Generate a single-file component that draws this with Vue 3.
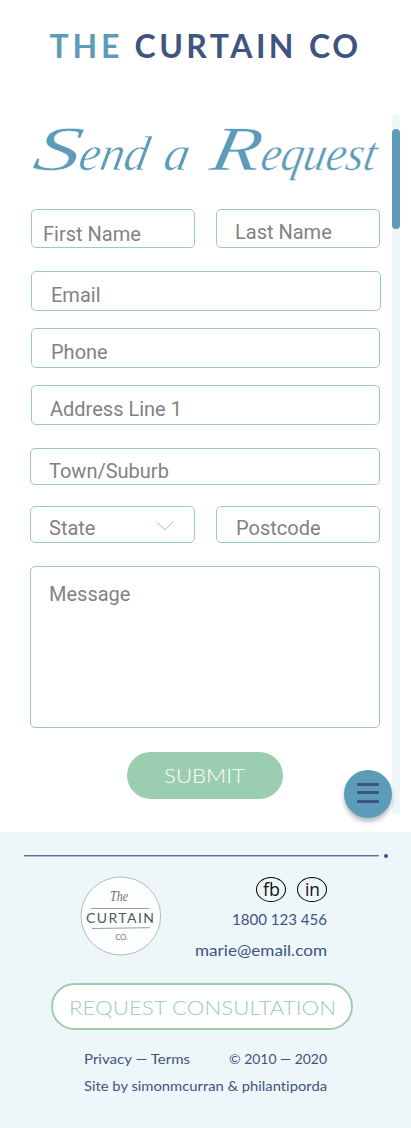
<script setup>
import { h } from 'vue'

// One line of text set to a fixed measure.
const FitText = (props) =>
  h('svg', { width: props.w, height: props.h, class: 'fit' }, [
    h('text', { x: 0, y: props.base, textLength: props.w, lengthAdjust: props.adjust || 'spacingAndGlyphs', fill: 'currentColor' }, props.text),
  ])
FitText.props = ['w', 'h', 'base', 'text', 'adjust']
</script>

<template>
  <div class="page">
    <header class="brand">
      <svg width="411" height="100" role="img">
        <text class="brand-the" x="49.500" y="58" textLength="70">THE</text>
        <text class="brand-name" x="134.500" y="58" textLength="159">CURTAIN</text>
        <text class="brand-name" x="309" y="58" textLength="49">CO</text>
      </svg>
    </header>

    <main class="content">
      <svg class="heading" width="411" height="109">
        <text transform="translate(0 70) skewX(-11)"><tspan class="cap" x="31" textLength="47" lengthAdjust="spacingAndGlyphs">S</tspan><tspan x="77" textLength="69" lengthAdjust="spacingAndGlyphs">end</tspan> <tspan x="162" textLength="25" lengthAdjust="spacingAndGlyphs">a</tspan> <tspan class="cap" x="208" textLength="50" lengthAdjust="spacingAndGlyphs">R</tspan><tspan x="259" textLength="115" lengthAdjust="spacingAndGlyphs">equest</tspan></text>
      </svg>

      <form class="form" @submit.prevent>
        <div class="row names">
          <div class="field first">First Name</div>
          <div class="field last">Last Name</div>
        </div>
        <div class="field email">Email</div>
        <div class="field phone">Phone</div>
        <div class="field address">Address Line 1</div>
        <div class="field town">Town/Suburb</div>
        <div class="row places">
          <div class="field state">
            <span>State</span>
            <svg class="chevron" width="18" height="10" viewBox="0 0 18 10"><path d="M.7.7 9 8.800 17.300.7" /></svg>
          </div>
          <div class="field postcode">Postcode</div>
        </div>
        <div class="field message">Message</div>
        <button class="submit"><FitText :w="81" :h="24" :base="19" text="SUBMIT" /></button>
      </form>

      <div class="track"><div class="thumb"></div></div>
      <div class="menu"><i></i><i></i><i></i></div>
    </main>

    <footer class="footer">
      <div class="rule"><i class="line"></i><i class="dot"></i></div>
      <div class="info">
        <svg class="logo" width="82" height="80" viewBox="0 0 82 80">
          <ellipse cx="40.800" cy="40" rx="39.800" ry="39" />
          <text class="logo-the" x="30" y="24.500" textLength="18" lengthAdjust="spacingAndGlyphs">The</text>
          <path d="M11 32.500h58M12 52.500l58-.8" />
          <text class="logo-name" x="6" y="47" textLength="68">CURTAIN</text>
          <text class="logo-co" x="35.500" y="63.500" textLength="12">CO.</text>
        </svg>
        <div class="contact">
          <div class="social">
            <span class="badge"><FitText :w="17" :h="23" :base="18" text="fb" /></span>
            <span class="badge"><FitText :w="15" :h="23" :base="18" text="in" /></span>
          </div>
          <FitText :w="95" :h="31" :base="21.500" text="1800 123 456" />
          <FitText :w="132" :h="31" :base="21.500" text="marie@email.com" />
        </div>
      </div>
      <button class="consult"><FitText :w="267" :h="24" :base="19" text="REQUEST CONSULTATION" /></button>
      <div class="legal">
        <div class="legal-row">
          <FitText :w="106" :h="27" :base="20" text="Privacy — Terms" />
          <FitText :w="98" :h="27" :base="20" text="© 2010 — 2020" />
        </div>
        <FitText :w="243" :h="27" :base="20" text="Site by simonmcurran &amp; philantiporda" />
      </div>
    </footer>
  </div>
</template>

<style>
body { background: #fff; }
</style>

<style scoped>
.page { width: 411px; height: 1128px; overflow: hidden; font-family: Lato, "Liberation Sans", sans-serif; font-variant-ligatures: none; background: #fff; }
.page svg { display: block; overflow: visible; }
.brand { height: 100px; font-size: 32px; font-weight: 700; }
.brand-the { fill: #5c9cb9; }
.brand-name { fill: #3f5481; }
.content { position: relative; height: 732px; }
.heading { font-family: "Liberation Serif", serif; font-style: italic; font-size: 49px; fill: #5c9cb9; stroke: #fff; stroke-width: .5px; }
.heading .cap { font-size: 63px; }

.form { display: flex; flex-direction: column; margin-left: 30px; width: 351px; }
.row { display: flex; justify-content: space-between; width: 350px; }
.field { box-sizing: border-box; border: 1px solid #9bcdb0; border-radius: 5px; font: 20px/24px Roboto, sans-serif; color: #828282; }
.row.names { padding-left: 1px; width: 349px; }
.first { width: 164px; height: 39px; padding: 12px 0 0 11px; }
.last { width: 164px; height: 39px; padding: 10px 0 0 18px; }
.email { margin: 23px 0 0 1px; width: 350px; height: 40px; padding: 11px 0 0 19px; }
.phone { margin: 17px 0 0 1px; width: 349px; height: 40px; padding: 11px 0 0 19px; }
.address { margin: 17px 0 0 1px; width: 349px; height: 40px; padding: 11px 0 0 18px; }
.town { margin-top: 23px; width: 350px; height: 37px; padding: 10px 0 0 18px; }
.places { margin-top: 21px; }
.state { display: flex; justify-content: space-between; width: 165px; height: 37px; padding: 9px 20px 0 18px; }
.chevron { margin-top: 5px; fill: none; stroke: #9bcdb0; }
.postcode { width: 164px; height: 37px; padding: 9px 0 0 19px; }
.message { margin-top: 23px; width: 350px; height: 162px; padding: 15px 0 0 18px; }
.submit { display: flex; align-items: center; justify-content: center; margin: 24px 0 0 97px; width: 156px; height: 47px; padding: 1px 2px 0 0; border: 0; border-radius: 24px; background: #9bcdb0; color: #fff; font: 300 20px Lato, sans-serif; }

.track { position: absolute; left: 392px; top: 14px; width: 8px; height: 700px; border-radius: 4px; background: #edf6f8; display: flow-root; }
.thumb { margin-top: 15px; height: 100px; border-radius: 4px; background: #5c9cb9; }
.menu { position: absolute; left: 344px; top: 670px; width: 48px; height: 48px; box-sizing: border-box; padding-top: 13px; border-radius: 50%; background: #5c9cb9; box-shadow: 0 4px 4px rgba(0, 0, 0, .25); display: flex; flex-direction: column; align-items: center; gap: 5px; }
.menu i { width: 22px; height: 3px; background: #3f5481; }
.menu i:last-child { margin-top: 1px; }

.footer { height: 296px; background: #edf6f8; color: #3f5481; }
.rule { display: flex; align-items: center; padding: 22px 0 0 24px; height: 4px; }
.line { width: 355px; height: 1px; background: #5a719c; border-bottom: 1px solid #a9b9cf; box-sizing: content-box; }
.dot { width: 4px; height: 4px; margin-left: 5px; border-radius: 50%; background: #3f5481; }
.info { display: flex; justify-content: space-between; align-items: flex-start; margin-top: 18px; padding: 0 84px 0 80px; height: 107px; }
.logo ellipse { fill: #fdfefe; stroke: #a6aaab; stroke-width: .8; }
.logo path { stroke: #8e9fac; stroke-width: 1; }
.logo-the { font: italic 300 14px "Liberation Serif", serif; fill: #6d7174; }
.logo-name { font: 400 14px Lato, sans-serif; fill: #505765; }
.logo-co { font: 400 7.500px Lato, sans-serif; fill: #6d7174; }
.contact { display: flex; flex-direction: column; align-items: flex-end; font-size: 16px; }
.social { display: flex; gap: 11px; height: 27px; color: #111; }
.badge { box-sizing: border-box; width: 30px; height: 25px; margin-top: 1px; border: 1px solid #000; border-radius: 50%; display: flex; justify-content: center; font: 18px "Open Sans", sans-serif; }
.consult { display: flex; align-items: center; justify-content: center; box-sizing: border-box; margin: 0 0 0 51px; width: 302px; height: 47px; padding: 2px 0 0; border: 2px solid #9bcdb0; border-radius: 24px; background: #fff; color: #9bcdb0; font: 300 20px Lato, sans-serif; }
.legal { margin: 14px 84px 0; font-size: 14px; }
.legal-row { display: flex; justify-content: space-between; }
</style>
